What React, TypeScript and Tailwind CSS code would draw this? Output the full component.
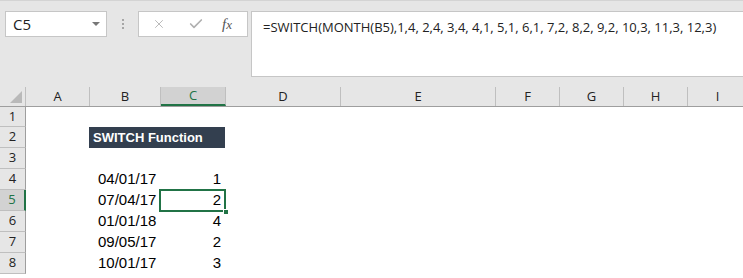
import { X, Check } from "lucide-react";

const cols = [
  { id: "A", w: 64 },
  { id: "B", w: 71 },
  { id: "C", w: 65 },
  { id: "D", w: 115 },
  { id: "E", w: 155 },
  { id: "F", w: 64 },
  { id: "G", w: 64 },
  { id: "H", w: 64 },
  { id: "I", w: 60 },
];

const rowHeights = [20, 21, 21, 21, 21, 21, 21, 21];

const data: Record<number, [string, string]> = {
  4: ["04/01/17", "1"],
  5: ["07/04/17", "2"],
  6: ["01/01/18", "4"],
  7: ["09/05/17", "2"],
  8: ["10/01/17", "3"],
};

const ui = { fontFamily: '"Open Sans", "Liberation Sans", sans-serif' };
const cell = { fontFamily: '"Liberation Sans", Arial, sans-serif' };

function Row({ n, h }: { n: number; h: number }) {
  const active = n === 5;
  const d = data[n];
  return (
    <div className="flex" style={{ height: h }}>
      <div
        className={
          "w-[26px] shrink-0 flex items-center justify-center text-[13px] border-b border-[#bfbfbf] " +
          (active
            ? "bg-[#d2d2d2] text-[#217346] border-r-2 border-r-[#217346]"
            : "bg-[#e6e6e6] text-[#222] border-r border-r-[#9e9e9e]")
        }
        style={ui}
      >
        {n}
      </div>
      <div className="w-[63px] shrink-0" />
      {n === 2 ? (
        <div
          className="w-[136px] shrink-0 bg-[#333f4f] text-white font-bold text-[13px] flex items-center pl-[4px]"
          style={cell}
        >
          SWITCH Function
        </div>
      ) : (
        <>
          <div
            className="w-[71px] shrink-0 flex items-center pl-[9px] text-[15px] text-black"
            style={cell}
          >
            {d ? d[0] : ""}
          </div>
          <div
            className={
              "w-[65px] shrink-0 relative flex items-center justify-end pr-[4px] text-[15px] text-black " +
              (active ? "outline-2 outline-[#217346] -outline-offset-1" : "")
            }
            style={cell}
          >
            {d ? d[1] : ""}
            {active && (
              <span className="absolute right-[-4px] bottom-[-4px] w-[6px] h-[6px] bg-[#217346] border border-white" />
            )}
          </div>
        </>
      )}
      <div className="flex-1 bg-white" />
    </div>
  );
}

export default function App() {
  return (
    <div className="w-[743px] h-[278px] overflow-hidden bg-white select-none">
      <div className="h-[87px] bg-[#e6e6e6] border-t border-[#d4d4d4] flex items-start pt-[10px] pl-[5px]">
        <div
          className="w-[102px] h-[26px] bg-white border border-[#c6c6c6] flex items-center pl-[7px] pr-[6px] text-[15px] text-[#222]"
          style={ui}
        >
          <span className="flex-1">C5</span>
          <span className="w-0 h-0 border-l-[4px] border-r-[4px] border-t-[4px] border-l-transparent border-r-transparent border-t-[#777]" />
        </div>
        <div className="w-[31px] h-[26px] flex flex-col items-center justify-center gap-[2px]">
          <span className="w-[2px] h-[2px] bg-[#a6a6a6]" />
          <span className="w-[2px] h-[2px] bg-[#a6a6a6]" />
          <span className="w-[2px] h-[2px] bg-[#a6a6a6]" />
        </div>
        <div className="w-[110px] h-[26px] bg-white border border-[#c6c6c6] flex items-center pl-[13px]">
          <X className="w-[14px] h-[14px] text-[#b0b0b0]" strokeWidth={1.5} />
          <Check className="w-[16px] h-[16px] text-[#b0b0b0] ml-[22px]" strokeWidth={2.5} />
          <span
            className="ml-[18px] text-[15px] italic text-[#555]"
            style={{ fontFamily: '"Liberation Serif", serif' }}
          >
            f<span className="text-[13px]">x</span>
          </span>
        </div>
        <div className="ml-[3px] flex-1 h-[66px] bg-white border border-[#c6c6c6] border-r-0 pl-[11px] pt-[6px] text-[13px] text-[#222] whitespace-nowrap" style={ui}>
          =SWITCH(MONTH(B5),1,4, 2,4, 3,4, 4,1, 5,1, 6,1, 7,2, 8,2, 9,2, 10,3, 11,3, 12,3)
        </div>
      </div>
      <div className="flex h-[20px] bg-[#e6e6e6] border-b border-[#9e9e9e]">
        <div className="w-[26px] shrink-0 border-r border-[#bfbfbf] flex items-end justify-end pr-[3px] pb-[3px]">
          <span style={{ width: 0, height: 0, borderBottom: "12px solid #b9b9b9", borderLeft: "12px solid transparent" }} />
        </div>
        {cols.map((c) => {
          const active = c.id === "C";
          return (
            <div
              key={c.id}
              className={
                "shrink-0 flex items-center justify-center text-[13px] border-r border-[#bfbfbf] " +
                (active
                  ? "bg-[#d2d2d2] text-[#217346] border-b-2 border-b-[#217346]"
                  : "text-[#222]")
              }
              style={{ ...ui, width: c.w }}
            >
              {c.id}
            </div>
          );
        })}
      </div>
      {rowHeights.map((h, i) => (
        <Row key={i} n={i + 1} h={h} />
      ))}
    </div>
  );
}
